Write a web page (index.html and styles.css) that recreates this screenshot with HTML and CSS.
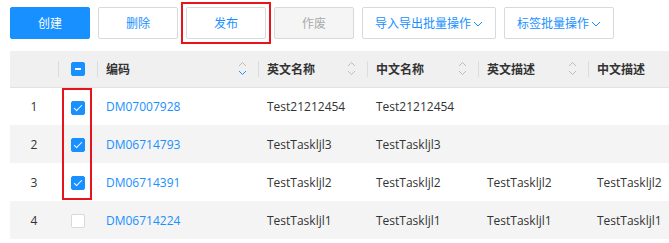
FILE: index.html
```html
<!DOCTYPE html>
<html lang="zh-CN">
<head>
    <meta charset="UTF-8">
    <meta name="viewport" content="width=device-width, initial-scale=1.0">
    <title>编码管理</title>
    <link rel="stylesheet" href="styles.css">
</head>
<body>
    <div class="toolbar">
        <button class="btn btn-primary">创建</button>
        <button class="btn">删除</button>
        <span class="mark-frame"><button class="btn">发布</button></span>
        <button class="btn" disabled>作废</button>
        <button class="btn btn-drop">导入导出批量操作<svg class="caret" viewBox="0 0 10 6" width="10" height="6"><path d="M1 1 L5 5 L9 1" fill="none" stroke="currentColor" stroke-width="1"/></svg></button>
        <button class="btn btn-drop">标签批量操作<svg class="caret" viewBox="0 0 10 6" width="10" height="6"><path d="M1 1 L5 5 L9 1" fill="none" stroke="currentColor" stroke-width="1"/></svg></button>
    </div>

    <div class="table-wrap">
        <table class="grid">
            <colgroup>
                <col style="width:48px">
                <col style="width:39px">
                <col style="width:161px">
                <col style="width:109px">
                <col style="width:111px">
                <col style="width:110px">
                <col style="width:110px">
            </colgroup>
            <thead>
                <tr>
                    <th></th>
                    <th><div class="th-inner center"><span class="check indeterminate"></span></div></th>
                    <th><div class="th-inner">编码
                        <svg class="sort" viewBox="0 0 9 15" width="9" height="15"><path d="M1 5 L4.5 1.5 L8 5" fill="none" stroke="#bbb"/><path d="M1 10 L4.5 13.5 L8 10" fill="none" stroke="#1890ff"/></svg></div></th>
                    <th><div class="th-inner">英文名称
                        <svg class="sort" viewBox="0 0 9 15" width="9" height="15"><path d="M1 5 L4.5 1.5 L8 5" fill="none" stroke="#bbb"/><path d="M1 10 L4.5 13.5 L8 10" fill="none" stroke="#bbb"/></svg></div></th>
                    <th><div class="th-inner">中文名称
                        <svg class="sort" viewBox="0 0 9 15" width="9" height="15"><path d="M1 5 L4.5 1.5 L8 5" fill="none" stroke="#bbb"/><path d="M1 10 L4.5 13.5 L8 10" fill="none" stroke="#bbb"/></svg></div></th>
                    <th><div class="th-inner">英文描述
                        <svg class="sort" viewBox="0 0 9 15" width="9" height="15"><path d="M1 5 L4.5 1.5 L8 5" fill="none" stroke="#bbb"/><path d="M1 10 L4.5 13.5 L8 10" fill="none" stroke="#bbb"/></svg></div></th>
                    <th><div class="th-inner">中文描述</div></th>
                </tr>
            </thead>
            <tbody>
                <tr>
                    <td class="num">1</td>
                    <td class="center"><span class="check checked"></span></td>
                    <td><a href="#" class="code-link">DM07007928</a></td>
                    <td>Test21212454</td>
                    <td>Test21212454</td>
                    <td></td>
                    <td></td>
                </tr>
                <tr>
                    <td class="num">2</td>
                    <td class="center"><span class="check checked"></span></td>
                    <td><a href="#" class="code-link">DM06714793</a></td>
                    <td>TestTaskljl3</td>
                    <td>TestTaskljl3</td>
                    <td></td>
                    <td></td>
                </tr>
                <tr>
                    <td class="num">3</td>
                    <td class="center"><span class="check checked"></span></td>
                    <td><a href="#" class="code-link">DM06714391</a></td>
                    <td>TestTaskljl2</td>
                    <td>TestTaskljl2</td>
                    <td>TestTaskljl2</td>
                    <td>TestTaskljl2</td>
                </tr>
                <tr>
                    <td class="num">4</td>
                    <td class="center"><span class="check"></span></td>
                    <td><a href="#" class="code-link">DM06714224</a></td>
                    <td>TestTaskljl1</td>
                    <td>TestTaskljl1</td>
                    <td>TestTaskljl1</td>
                    <td>TestTaskljl1</td>
                </tr>
            </tbody>
        </table>
        <!-- annotation box around the selected rows -->
        <div class="mark-box"></div>
    </div>
</body>
</html>
```

FILE: styles.css
```css
:root {
    --primary: #1890ff;
    --border: #d9d9d9;
    --text: #333;
    --mark: #e8141b;
}

* {
    margin: 0;
    padding: 0;
    box-sizing: border-box;
    font-family: 'Open Sans', 'Noto Sans CJK SC', sans-serif;
}

body {
    background: #fff;
    color: var(--text);
    font-size: 12px;
    overflow: hidden;
}

/* Toolbar */
.toolbar {
    display: flex;
    gap: 8px;
    padding: 7px 10px 0;
    margin-bottom: 12px;
}

.btn {
    height: 32px;
    min-width: 80px;
    padding: 0 12px;
    background: #fff;
    border: 1px solid var(--border);
    border-radius: 2px;
    color: var(--primary);
    font-size: 12px;
    display: inline-flex;
    align-items: center;
    justify-content: center;
    cursor: pointer;
}

.btn-primary {
    background: var(--primary);
    border-color: var(--primary);
    color: #fff;
}

.btn:disabled {
    background: #f5f5f5;
    color: #aaa;
    cursor: not-allowed;
}

/* Red annotation frame around a button, takes no extra room */
.mark-frame {
    display: flex;
    margin: -5px;
    padding: 3px;
    border: 2px solid var(--mark);
}

.caret {
    margin-left: 2px;
    margin-top: 1px;
}

/* Table */
.table-wrap {
    position: relative;
    margin-left: 10px;
    overflow: hidden;
}

.grid {
    width: 688px;
    table-layout: fixed;
    border-collapse: collapse;
}

.grid th {
    height: 36px;
    padding: 0;
    background: #f0f0f0;
    border-bottom: 1px solid #e2e2e2;
    text-align: left;
    font-weight: bold;
    color: #333;
}

.th-inner {
    display: flex;
    align-items: center;
    justify-content: space-between;
    height: 16px;
    padding: 0 11px 0 8px;
    border-left: 1px solid #dcdcdc;
    white-space: nowrap;
}

.th-inner.center {
    justify-content: center;
    padding: 0;
}

.sort {
    display: block;
}

.grid td {
    height: 38px;
    padding: 0 9px;
    white-space: nowrap;
    overflow: hidden;
}

.grid tbody tr:nth-child(even) td {
    background: #f4f4f4;
}

.grid td.num {
    text-align: center;
    padding: 0;
}

.grid td.center {
    padding: 0;
    text-align: center;
}

.code-link {
    color: var(--primary);
    text-decoration: none;
}

/* Checkbox */
.check {
    display: inline-block;
    vertical-align: middle;
    width: 14px;
    height: 14px;
    border: 1px solid var(--border);
    border-radius: 2px;
    background: #fff;
    position: relative;
}

.check.checked,
.check.indeterminate {
    background: var(--primary);
    border-color: var(--primary);
}

.check.checked::after {
    content: '';
    position: absolute;
    left: 4px;
    top: 1px;
    width: 3px;
    height: 7px;
    border: solid #fff;
    border-width: 0 1.5px 1.5px 0;
    transform: rotate(45deg);
}

.check.indeterminate::after {
    content: '';
    position: absolute;
    left: 3px;
    top: 5px;
    width: 6px;
    height: 2px;
    background: #fff;
}

/* Red annotation around checked rows */
.mark-box {
    position: absolute;
    left: 52px;
    top: 37px;
    width: 30px;
    height: 112px;
    border: 2px solid var(--mark);
    pointer-events: none;
}
```
